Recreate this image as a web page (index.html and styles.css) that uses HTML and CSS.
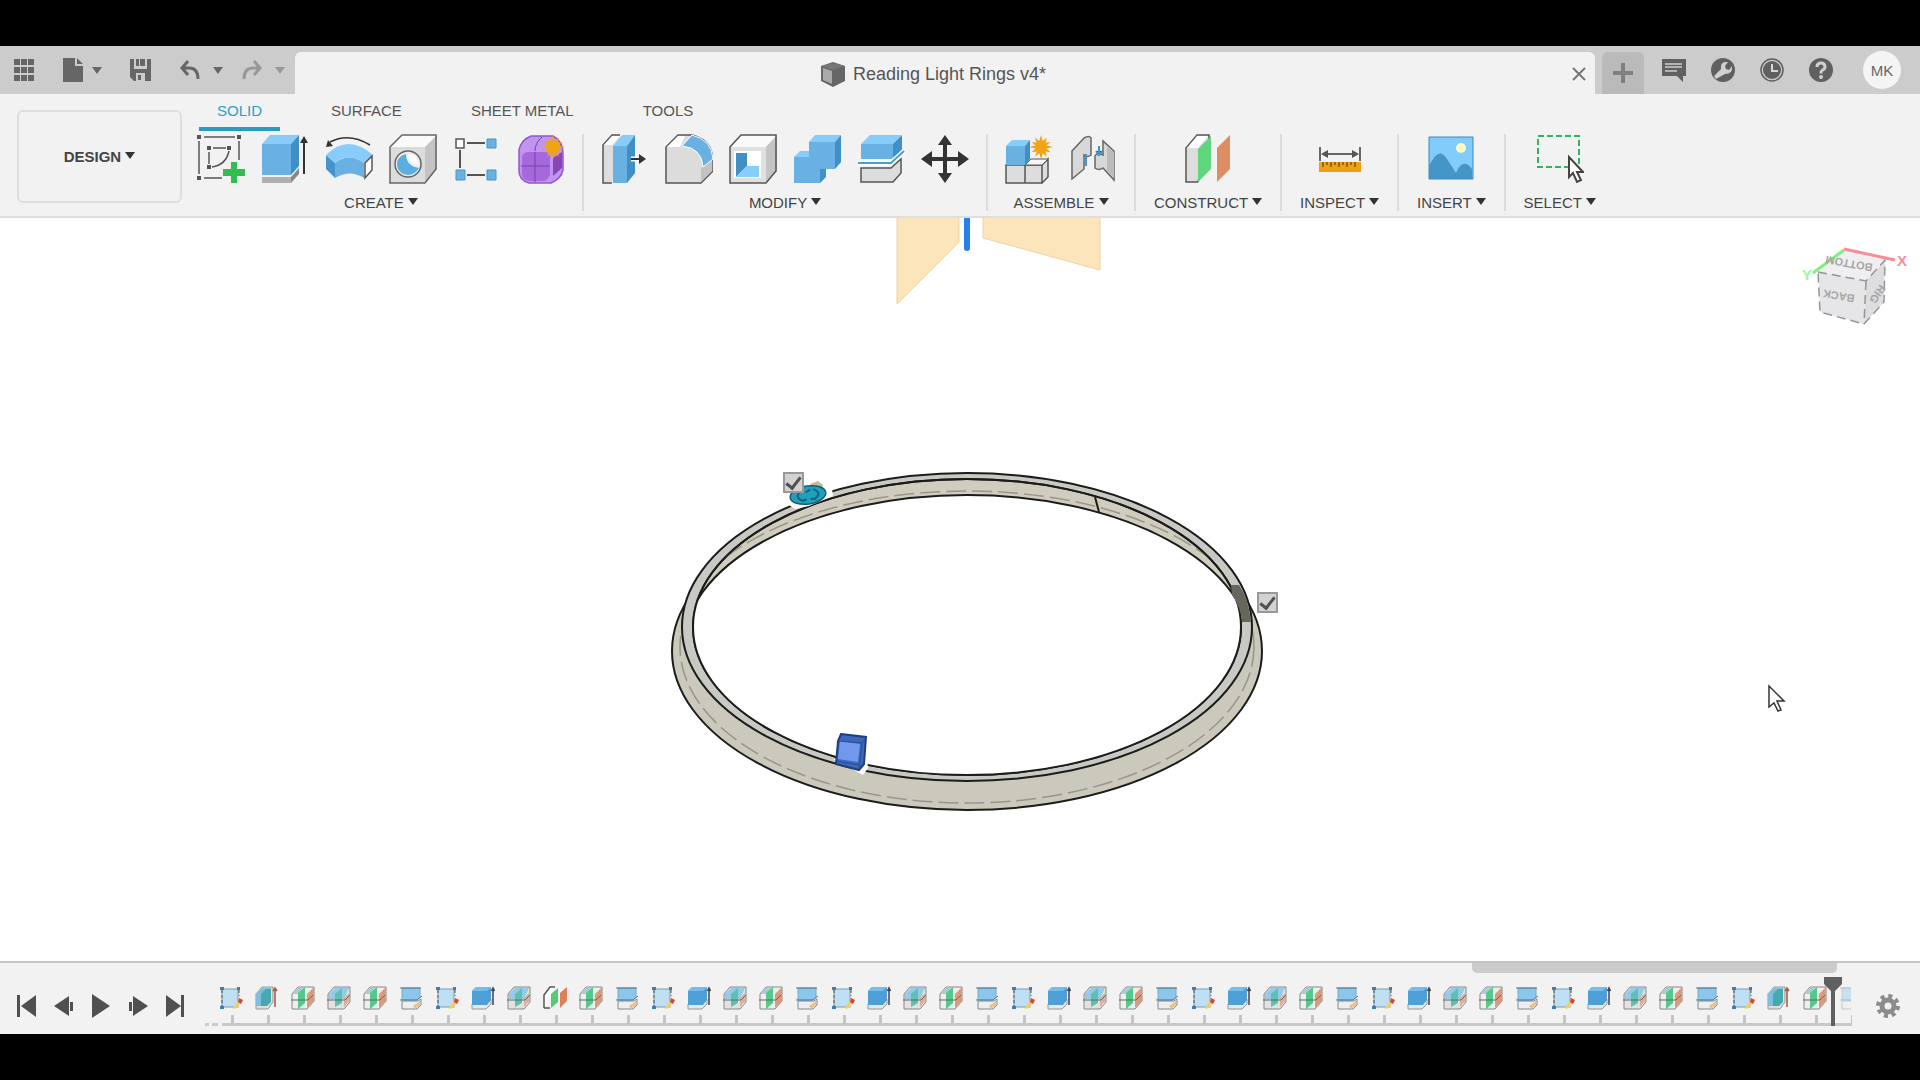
FILE: index.html
```html
<!DOCTYPE html>
<html lang="en">
<head>
    <meta charset="UTF-8">
    <meta name="viewport" content="width=device-width, initial-scale=1.0">
    <title>Reading Light Rings v4*</title>
    <link rel="stylesheet" href="styles.css">
</head>
<body>
    <!-- shared shapes -->
    <svg class="defs" aria-hidden="true">
        <symbol id="star" viewBox="0 0 24 24">
            <path fill="#f2a312" d="M12 0l1.800 6 4.200-3.500-1.500 5.300 5-.8-4 3.500L24 12l-6.500 1.500 4 3.800-5.200-.9L18 22l-4.200-3.800L12 24l-1.800-5.800L6 22l1.700-5.600-5.200.9 4-3.800L0 12l6.500-1.500-4-3.500 5 .8L6 2.500 10.200 6z"/>
        </symbol>
        <symbol id="f-sketch" viewBox="0 0 24 24">
            <rect x="3" y="3" width="16" height="18" fill="#bfe0f4" stroke="#7f99a8"/>
            <path fill="#3d7fae" d="M1 1h4v3H1zM18 1h3v3h-3zM1 20h4v3H1z"/>
            <path stroke="#555" stroke-dasharray="3 2" d="M3 4v16M20 4v6"/>
            <path fill="#f2cf63" d="M15 20l5-7 3 2-5 7-4 1z"/>
            <path fill="#d8413a" d="M20 12l4 2-2 4-3-2z"/>
        </symbol>
        <symbol id="f-extrude" viewBox="0 0 24 24">
            <path fill="#e6e6e6" stroke="#999" d="M1 18v5h14l5-5v-5z"/>
            <path fill="#4d9fd6" d="M1 5l4-4h15v13l-4 5H1z"/>
            <path fill="#74bdec" d="M1 5l4-4h15l-4 4z"/>
            <path stroke="#444" stroke-width="1.500" d="M22 4v15M20.500 5L22 2l1.500 3"/>
        </symbol>
        <symbol id="f-body" viewBox="0 0 24 24">
            <path fill="#ddd" stroke="#999" d="M1 8l6-7h11v15l-5 7H1z"/>
            <path fill="#7dbfe0" d="M1 8l6-6h9v5L12 20H1z"/>
            <path fill="#48a9ad" d="M6 8l5-5h5v13l-4 4H6z"/>
            <path stroke="#a8563e" stroke-width="1.500" d="M20 4v17M18 5l2-3 2 3"/>
        </symbol>
        <symbol id="f-plane" viewBox="0 0 24 24">
            <path fill="#eee" stroke="#888" d="M1 8l6-7h16v14l-7 8H1z"/>
            <path fill="#a9cddd" d="M7 2h6L7 8H2z"/>
            <path fill="#53c98a" d="M7 7l7-6v16l-7 6z"/>
            <path fill="#d99a7e" d="M16 8l7-7v14l-7 7z"/>
            <path stroke="#666" d="M0 14h17l5-5"/>
        </symbol>
        <symbol id="f-split" viewBox="0 0 24 24">
            <path fill="#e2e2e2" stroke="#888" d="M1 8l6-7h16v15l-6 7H1z"/>
            <path fill="#93cbe8" d="M2 8l6-6h14l-5 11H2z"/>
            <path fill="#5cc1ae" d="M8 8l7-6v15l-7 4z"/>
            <path fill="#dfae98" d="M17 12l5-5v8l-5 6z"/>
            <path stroke="#666" d="M0 14h18l5-5"/>
        </symbol>
        <symbol id="f-cut" viewBox="0 0 24 24">
            <path fill="#eee" stroke="#888" d="M3 15h16l3-2v6l-4 4H3z"/>
            <path fill="#8bc7ec" stroke="#7aa6c2" d="M3 2h18v9l-3 3H3z"/>
            <path stroke="#4c7896" d="M1 2h21M1 14h17l5-4"/>
            <path fill="#edc084" d="M14 20l7-5v4l-5 4z"/>
        </symbol>
        <symbol id="f-construct" viewBox="0 0 24 24">
            <path fill="#fff" stroke="#555" stroke-width="1.500" d="M1 22V9l6-8h5M1 22h6"/>
            <path fill="#52cc74" d="M8 8l7-6v14l-7 6z"/>
            <path fill="#dd8058" d="M17 7l7-6v14l-7 7z"/>
        </symbol>
    </svg>

    <header class="titlebar">
        <nav class="quick">
            <button aria-label="Data panel"><svg width="22" height="22"><path fill="#666" d="M1 0h6v6H1zM8 0h6v6H8zM15 0h6v6h-6zM1 8h6v6H1zM8 8h6v6H8zM15 8h6v6h-6zM1 16h6v6H1zM8 16h6v6H8zM15 16h6v6h-6z"/></svg></button>
            <button class="menu file" aria-label="File"><svg width="20" height="24"><path fill="#666" d="M0 0h12v8h8v16H0zM14 0l6 6h-6z"/></svg><span class="caret"></span></button>
            <button class="save" aria-label="Save"><svg width="22" height="24"><path fill="#666" fill-rule="evenodd" d="M0 1h21v22H4l-4-4zM4 1v10h13V1zM6 15v8h9v-8z"/><path fill="#666" d="M6 1h3v7H6zM10 1h5v7h-5zM8 17h3v5H8z"/></svg></button>
            <button class="menu" aria-label="Undo"><svg width="20" height="20" fill="none" stroke="#666" stroke-width="3"><path d="M8 1L2 8l6 7M2 8h7q9 0 9 11"/></svg><span class="caret wide"></span></button>
            <button class="menu faded" aria-label="Redo"><svg width="20" height="20" fill="none" stroke="#666" stroke-width="3"><path d="M12 1l6 7-6 7M18 8h-7q-9 0-9 11"/></svg><span class="caret wide"></span></button>
        </nav>
        <div class="document">
            <h1>
                <svg width="24" height="25"><path fill="#666" d="M0 4L12 0l12 4v15l-12 6L0 19z"/><path fill="#aaa" d="M2 6l9 3v13l-9-4z"/><path fill="#777" d="M1 4l11 4 11-4-11-3z"/></svg>
                Reading Light Rings v4*
            </h1>
            <button class="close" aria-label="Close"><svg width="14" height="14" stroke="#777" stroke-width="2"><path d="M1 1l12 12M13 1L1 13"/></svg></button>
        </div>
        <button class="new-tab" aria-label="New design"><svg width="20" height="20"><path fill="#808080" d="M8 0h4v8h8v4h-8v8H8v-8H0V8h8z"/></svg></button>
        <div class="account">
            <button aria-label="Comments"><svg width="24" height="24"><path fill="#606060" d="M0 1h24v17h-3v6l-6-6H0z"/><path stroke="#d0d0d0" stroke-width="1.500" d="M3 6h17M3 9h17M3 13h12"/></svg></button>
            <button aria-label="Extensions"><svg width="24" height="24"><circle cx="12" cy="12" r="12" fill="#606060"/><path fill="#d0d0d0" d="M5 21l-2-3 7-7q-1-6 4-7l3 0-3 4 1 3 3 1 3-4q1 8-7 8z"/></svg></button>
            <button aria-label="Job status"><svg width="24" height="24"><circle cx="12" cy="12" r="11" fill="none" stroke="#606060" stroke-width="1.500"/><circle cx="12" cy="12" r="9" fill="#606060"/><path fill="none" stroke="#d8d8d8" stroke-width="2" d="M12 6v7h6"/></svg></button>
            <button aria-label="Help"><svg width="24" height="24"><circle cx="12" cy="12" r="12" fill="#606060"/><path fill="none" stroke="#d0d0d0" stroke-width="3" d="M8 9q0-4 4-4t4 4q0 2-3 3.500-1 .5-1 3"/><circle cx="12" cy="19" r="2" fill="#d0d0d0"/></svg></button>
            <button class="avatar">MK</button>
        </div>
    </header>

    <section class="ribbon">
        <button class="workspace">DESIGN <span class="caret"></span></button>
        <div class="tools">
            <nav class="tabs">
                <a href="#solid" class="active">SOLID</a>
                <a href="#surface">SURFACE</a>
                <a href="#sheet-metal">SHEET METAL</a>
                <a href="#tools">TOOLS</a>
            </nav>
            <div class="groups">
                <div class="group first">
                    <div class="icons">
                        <button aria-label="Create sketch"><svg viewBox="0 0 48 50"><path fill="none" stroke="#555" stroke-width="1.500" d="M7 3h31M2 7v33M7 44h18M42 7v19M16 14h13M12 18v12M32 17q-3 14-17 16"/><path fill="#555" d="M0 1h4v4H0zM40 1h4v4h-4zM0 42h4v4H0zM10 12h4v4h-4zM30 12h4v4h-4zM10 31h4v4h-4z"/><path fill="#31bd51" d="M34 28h6v7h8v7h-8v7h-6v-7h-8v-7h8z"/></svg></button>
                        <button aria-label="Extrude"><svg viewBox="0 0 48 50"><path fill="#b0b0b0" d="M1 43h29v6H1z"/><path fill="#888" d="M30 43l8-9v6l-8 9z"/><path fill="#68b1e2" d="M1 10h29v31H1z"/><path fill="#87ccfb" d="M1 10l8-9h29l-8 9z"/><path fill="#3f90c7" d="M30 10l8-9v31l-8 9z"/><path stroke="#333" stroke-width="2" d="M43 40V6"/><path fill="#333" d="M43 2l4 7h-8z"/></svg></button>
                        <button aria-label="Revolve"><svg viewBox="0 0 48 50"><path fill="#4595cb" d="M1 21l9 8v15l-9-9z"/><path fill="#68b1e2" d="M10 29q14-11 29 0v15q-14-9-29 0z"/><path fill="#87ccfb" d="M1 21q22-22 47 0l-9 8q-15-11-29 0z"/><path fill="#fff" stroke="#555" stroke-width="1.500" d="M40 29l7-7v14l-7 8z"/><path fill="none" stroke="#333" stroke-width="1.500" d="M45 11Q24-2 5 8"/><path fill="#333" d="M1 13l2-7 5 6z"/></svg></button>
                        <button aria-label="Hole"><svg viewBox="0 0 48 50"><path fill="#dcdcdc" d="M1 13h35v36H1z"/><path fill="#fafafa" d="M1 13L13 1h35L36 13z"/><path fill="#c4c4c4" d="M36 13L48 1v34L36 49z"/><path fill="none" stroke="#666" stroke-width="1.500" d="M1 13L13 1h34v34L36 49H1z"/><circle cx="19" cy="30" r="13" fill="#eee" stroke="#666" stroke-width="1.500"/><path fill="#5aaee0" d="M17 20q0 12 13 14-4 7-11 7-11-1-11-12 1-7 9-9z"/><path fill="#fff" d="M19 20q9 0 11 11-10 0-11-11z"/></svg></button>
                        <button aria-label="Pattern"><svg viewBox="0 0 48 50"><path stroke="#555" stroke-width="2" d="M14 9h18M7 16v18M14 41h18"/><path fill="#fff" stroke="#555" stroke-width="1.500" d="M3 5h8v9H3z"/><path fill="#68b1e2" stroke="#4d94c2" d="M34 5h9v9h-9zM3 36h9v10H3zM34 36h9v10h-9z"/></svg></button>
                        <button aria-label="Create form"><svg viewBox="0 0 48 50"><path fill="#bf95f0" stroke="#9257cc" stroke-width="1.500" d="M2 16Q4 6 14 2h22q10 5 10 18v16q-2 9-12 13H12Q2 46 2 37z"/><path fill="#a768dc" d="M5 22q2-4 6-4h18q4 1 4 5v18q-2 5-6 6H12q-6-1-7-6z"/><path fill="#8745b8" d="M36 24l9-6v16l-9 8z"/><path fill="none" stroke="#7b42aa" d="M4 32h29M18 18v30M18 17q0-8 7-14"/><use href="#star" x="24" y="1" width="24" height="24"/></svg></button>
                    </div>
                    <button class="label">CREATE <span class="caret"></span></button>
                </div>
                <div class="group">
                    <div class="icons">
                        <button aria-label="Press pull"><svg viewBox="0 0 48 50"><path fill="#ddd" stroke="#555" stroke-width="1.500" d="M11 49H2V11L11 1h8"/><path fill="#fff" d="M3 11l8-9h8l-8 9z"/><path fill="#68b1e2" d="M12 12h14v37H12z"/><path fill="#87ccfb" d="M12 12l9-11h13l-8 11z"/><path fill="#3f90c7" d="M26 12l8-11v38l-8 10z"/><path stroke="#fff" stroke-width="5" d="M30 25h9"/><path stroke="#333" stroke-width="2" d="M30 25h10"/><path fill="#333" d="M38 20l7 5-7 5z"/></svg></button>
                        <button aria-label="Fillet"><svg viewBox="0 0 48 50"><path fill="#dcdcdc" stroke="#555" stroke-width="1.500" d="M1 49V13L13 1h14q20 5 21 25v11L36 49z"/><path fill="#fff" d="M2 13L13 2h7l-5 11z"/><path fill="#c2c2c2" d="M36 34l11-9v12L36 48z"/><path fill="#68b1e2" stroke="#fff" d="M17 12L27 1q20 5 21 24l-10 8Q37 14 17 12z"/></svg></button>
                        <button aria-label="Shell"><svg viewBox="0 0 48 50"><path fill="#e0e0e0" d="M1 13h36v36H1z"/><path fill="#fafafa" d="M1 13L12 1h36L37 13z"/><path fill="#c4c4c4" d="M37 13L48 1v36L37 49z"/><path fill="none" stroke="#555" stroke-width="1.500" d="M1 13L12 1h35v36L37 49H1z"/><path fill="#fff" d="M5 17h27v27H5z"/><path fill="#3f90c7" d="M7 19h11v13L7 43z"/><path fill="#87ccfb" d="M18 32h12v11H7z"/></svg></button>
                        <button aria-label="Combine"><svg viewBox="0 0 48 50"><path fill="#68b1e2" d="M1 23h15V8h26v27H27v14H1z"/><path fill="#87ccfb" d="M1 23l6-6h9v6zM16 8l6-7h26l-6 7z"/><path fill="#3f90c7" d="M42 8l6-7v27l-6 7zM27 35h6v8l-6 6z"/></svg></button>
                        <button aria-label="Split body"><svg viewBox="0 0 48 50"><path fill="#ddd" stroke="#555" stroke-width="1.500" d="M4 34h30l10-9v14l-8 9H4z"/><path fill="#68b1e2" d="M4 10h32v15H4z"/><path fill="#87ccfb" d="M4 10l9-9h32l-9 9z"/><path fill="#3f90c7" d="M36 10l9-9v15l-9 9z"/><path fill="none" stroke="#fff" stroke-width="5" d="M1 29h33l13-12"/><path fill="none" stroke="#4b9ed4" stroke-width="2" d="M1 29h33l13-12"/></svg></button>
                        <button aria-label="Move"><svg viewBox="0 0 48 50"><path fill="#333" d="M24 1l7 10h-5v12h11v-6l11 8-11 8v-6H26v12h5l-7 10-7-10h5V27H11v6L0 25l11-8v6h11V11h-5z"/></svg></button>
                    </div>
                    <button class="label">MODIFY <span class="caret"></span></button>
                </div>
                <div class="group">
                    <div class="icons">
                        <button aria-label="New component"><svg viewBox="0 0 48 50"><path fill="#ddd" stroke="#555" stroke-width="1.500" d="M1 31h36v18H1zM20 31v18M37 31l6-6v18l-6 6"/><path fill="#f6f6f6" stroke="#555" d="M20 31l6-6h17l-6 6z"/><path fill="#68b1e2" d="M1 12h19v19H1z"/><path fill="#87ccfb" d="M1 12l6-6h18l-5 6z"/><path fill="#3f90c7" d="M20 12l5-6v19l-5 6z"/><use href="#star" x="24" y="1" width="24" height="24"/></svg></button>
                        <button aria-label="Joint"><svg viewBox="0 0 48 50"><path fill="#d8d8d8" stroke="#666" stroke-width="1.500" d="M3 17L15 4q5-3 7 0v17q-4 3-7 0v14L3 45zM45 17L34 7v14q-6-3-8 1v12q4 3 8 0l11 12z"/><path fill="#bbb" d="M38 13l7 5v26l-7-7z"/><path stroke="#4094c8" stroke-width="2" d="M17 20v12M30 12v9M27 17l3 4 3-4"/></svg></button>
                    </div>
                    <button class="label">ASSEMBLE <span class="caret"></span></button>
                </div>
                <div class="group wide">
                    <div class="icons">
                        <button aria-label="Offset plane"><svg viewBox="0 0 48 50"><path fill="#ddd" stroke="#555" stroke-width="1.500" d="M14 48H2V14L13 1h12v5L14 48"/><path fill="#fff" d="M3 14L13 2h11L14 14z"/><path fill="#5fd67c" d="M14 15L27 2v33L14 48z"/><path fill="#df8d62" d="M33 14L46 1v34L33 48z"/></svg></button>
                    </div>
                    <button class="label">CONSTRUCT <span class="caret"></span></button>
                </div>
                <div class="group wide">
                    <div class="icons">
                        <button aria-label="Measure"><svg viewBox="0 0 48 50"><path stroke="#666" stroke-width="2" d="M4 13v14M44 13v14M8 20h32"/><path fill="#555" d="M5 20l7-4v8zM43 20l-7-4v8z"/><path fill="#f0a010" d="M3 28h42v10H3z"/><path stroke="#795516" stroke-width="1.500" d="M7 28v5M11 28v3M15 28v5M19 28v3M23 28v5M27 28v3M31 28v5M35 28v3M39 28v5"/></svg></button>
                    </div>
                    <button class="label">INSPECT <span class="caret"></span></button>
                </div>
                <div class="group wide">
                    <div class="icons">
                        <button aria-label="Insert image"><svg viewBox="0 0 48 50"><path fill="#82ccfb" stroke="#3f86b5" d="M2 3h44v42H2z"/><path fill="#4595c8" d="M2 32q10-21 18-7l9 14q7-16 16-4v10H2z"/><circle cx="34" cy="14" r="5" fill="#fff9c8"/></svg></button>
                    </div>
                    <button class="label">INSERT <span class="caret"></span></button>
                </div>
                <div class="group wide last">
                    <div class="icons">
                        <button aria-label="Select"><svg viewBox="0 0 48 50"><path fill="none" stroke="#35b35b" stroke-width="2" stroke-dasharray="6 3" d="M2 2h41v31H2z"/><path fill="#fff" stroke="#444" stroke-width="2" d="M33 23v20l4-4 4 9 4-2-4-8h6z"/></svg></button>
                    </div>
                    <button class="label">SELECT <span class="caret"></span></button>
                </div>
            </div>
        </div>
    </section>

    <main class="viewport">
        <svg class="scene" viewBox="0 218 1920 743" preserveAspectRatio="xMidYMin slice">
            <!-- origin planes and axis -->
            <path fill="#fde5bb" stroke="#ecd3a3" d="M897 216v88l62-62v-26zM983 216v22l117 32v-54z"/>
            <path stroke="#2781ea" stroke-width="6" stroke-linecap="round" d="M967 214v34"/>

            <!-- ring body -->
            <clipPath id="rim"><ellipse cx="967" cy="627" rx="274" ry="148"/></clipPath>
            <g stroke="#1c1c1a" stroke-width="2">
                <ellipse cx="967" cy="651" rx="295" ry="159" fill="#cbc8bc"/>
                <ellipse cx="967" cy="647" rx="287" ry="156" fill="none" stroke="#98968c" stroke-width="1.500" stroke-dasharray="20 6"/>
                <ellipse cx="967" cy="627" rx="285" ry="154" fill="#c8c8c4"/>
                <ellipse cx="967" cy="627" rx="274" ry="148" fill="#d0cdbf"/>
                <g clip-path="url(#rim)">
                    <ellipse cx="967" cy="640" rx="290" ry="149" fill="none" stroke="#98968c" stroke-width="1.500" stroke-dasharray="20 6"/>
                    <ellipse cx="967" cy="648" rx="284" ry="153" fill="#fff"/>
                </g>
                <ellipse cx="967" cy="627" rx="274" ry="148" fill="none"/>
                <path d="M1095 497l4 15"/>
            </g>
            <path fill="#66665c" d="M1231 585h8q10 14 12 37h-9q-1-14-10-27z"/>

            <!-- selected parts -->
            <path fill="#fff" d="M786 503q0-12 19-17 20-6 27 3l1 7-24 10-14 3z"/>
            <path fill="#c6b99b" d="M810 484l8-3 5 4-2 8z"/>
            <g transform="rotate(-9 808 495)">
                <ellipse cx="808" cy="495" rx="18" ry="9" fill="#20a0bd" stroke="#175d70" stroke-width="1.500"/>
                <path fill="none" stroke="#146379" stroke-width="2" d="M802 490q-9 5 0 10l4-1M814 490q9 5 0 10l-4-1M806 492l5-2"/>
            </g>
            <path fill="#fff" d="M833 759l30 16 5-7-1-8z"/>
            <path fill="#3b68bc" stroke="#203e7c" stroke-width="2" d="M841 734l25 3-2 27-5 6-23-6 2-23z"/>
            <path fill="#7397ed" d="M840 741l20 3-2 18-20-3z"/>
            <path fill="none" stroke="#284b93" d="M838 741l24 2-3 26M837 761l22 4M862 743l4-5"/>

            <!-- view cube -->
            <g>
                <path fill="#efeff1" d="M1818 272l26-22 40 10-18 21z"/>
                <path fill="#e6e6e9" d="M1818 272l48 9-2 43-44-12z"/>
                <path fill="#dedee1" d="M1866 281l19-21-1 42-20 22z"/>
                <path fill="none" stroke="#969696" stroke-width="1.500" stroke-dasharray="9 5" d="M1818 272l48 9 19-21-1 42-20 22-44-12-2-40M1866 281l-2 43"/>
                <path stroke="#7df07d" stroke-width="3" d="M1844 250l-31 23"/>
                <path stroke="#fb8b96" stroke-width="3" d="M1844 249l51 11"/>
                <text class="face" transform="translate(1855 295) rotate(190)">BACK</text>
                <text class="face" transform="translate(1873 264) rotate(190)">BOTTOM</text>
                <text class="face" transform="translate(1880 284) rotate(125)">RIG</text>
                <text class="axis x" x="1897" y="266">X</text>
                <text class="axis y" x="1802" y="280">Y</text>
            </g>

            <path fill="#fff" stroke="#333" stroke-width="1.500" d="M1769 686v21l5-4 4 8 3-1-4-9h7z"/>
        </svg>
        <input type="checkbox" class="pick one" aria-label="First body" checked>
        <input type="checkbox" class="pick two" aria-label="Second body" checked>
    </main>

    <footer class="timeline">
        <div class="playback">
            <button aria-label="Go to start"><svg width="20" height="24" fill="#505050"><path d="M0 1h3v22H0zM19 1v22L4 12z"/></svg></button>
            <button aria-label="Step back"><svg width="20" height="24" fill="#505050"><path d="M15 2v20L0 12zM16 8h3v9h-3z"/></svg></button>
            <button aria-label="Play"><svg width="20" height="24" fill="#505050"><path d="M1 0v24l18-12z"/></svg></button>
            <button aria-label="Step forward"><svg width="20" height="24" fill="#505050"><path d="M5 2v20l15-10zM1 8h3v9H1z"/></svg></button>
            <button aria-label="Go to end"><svg width="20" height="24" fill="#505050"><path d="M16 1h3v22h-3zM1 1v22l15-11z"/></svg></button>
        </div>
        <div class="track">
            <div class="scroll"></div>
            <ol id="features"></ol>
        </div>
        <button class="settings" aria-label="Timeline settings"><svg width="24" height="24"><circle cx="12" cy="12" r="6" fill="none" stroke="#8c8c8c" stroke-width="5"/><circle cx="12" cy="12" r="10" fill="none" stroke="#8c8c8c" stroke-width="4" stroke-dasharray="4 3.850"/></svg></button>
    </footer>

    <script>
        const cycle = ['sketch', 'extrude', 'split', 'plane', 'cut'];
        let features = ['sketch', 'body', 'plane', 'split', 'plane', 'cut', 'sketch', 'extrude', 'split', 'construct', 'plane', 'cut'];

        for (let i = 0; i < 30; i++) {
            features.push(cycle[i % cycle.length]);
        }
        features.push('sketch', 'body', 'plane', 'cut');

        document.getElementById('features').innerHTML = features.map(type =>
            `<li><button aria-label="${type}"><svg width="24" height="24" fill="none"><use href="#f-${type}"/></svg></button></li>`
        ).join('');
    </script>
</body>
</html>
```
FILE: styles.css
```css
* {
    box-sizing: border-box;
}
body {
    font-family: "Liberation Sans", Arial, sans-serif;
    font-size: 15px;
    margin: 0;
    padding: 46px 0;
    height: 100vh;
    display: flex;
    flex-direction: column;
    background: #000;
    color: #444;
    overflow: hidden;
}
button {
    font: inherit;
    color: inherit;
    background: none;
    border: none;
    padding: 0;
    cursor: pointer;
    white-space: nowrap;
}
svg {
    display: block;
}
.defs {
    position: absolute;
    width: 0;
    height: 0;
}
.caret {
    display: inline-block;
    border: 5px solid transparent;
    border-top: 7px solid #333;
    border-bottom: 0;
    vertical-align: 3px;
}

/* title bar */
.titlebar {
    display: flex;
    height: 48px;
    flex-shrink: 0;
    padding-top: 6px;
    background: #cccccc;
}
.quick {
    width: 295px;
    display: flex;
    align-items: center;
    padding: 0 10px 6px 13px;
}
.quick button {
    display: flex;
    align-items: center;
    margin-right: 28px;
}
.quick .caret {
    border-top-color: #666;
    margin-left: 9px;
}
.quick .caret.wide {
    margin-left: 13px;
}
.quick .menu:nth-child(4) {
    margin-right: 19px;
}
.quick .faded {
    opacity: 0.5;
    margin-right: 0;
}
.document {
    flex: 1;
    display: flex;
    align-items: center;
    background: #f2f2f2;
    border-radius: 6px 6px 0 0;
    padding: 2px 9px 0 0;
}
.document h1 {
    flex: 1;
    display: flex;
    justify-content: center;
    align-items: center;
    gap: 8px;
    margin: 0;
    font-size: 18px;
    font-weight: normal;
    color: #555;
}
.new-tab {
    width: 42px;
    margin: 0 18px 0 7px;
    display: flex;
    align-items: center;
    justify-content: center;
    background: #bababa;
    border-radius: 6px 6px 0 0;
}
.account {
    display: flex;
    align-items: center;
    gap: 25px;
    padding: 0 19px 6px 0;
}
.avatar {
    width: 38px;
    height: 38px;
    margin-left: 5px;
    border-radius: 50%;
    background: #f4f4f4;
    color: #666;
}

/* ribbon */
.ribbon {
    display: flex;
    flex-shrink: 0;
    height: 124px;
    background: #f2f2f2;
    border-bottom: 2px solid #dedede;
}
.workspace {
    width: 165px;
    height: 93px;
    margin: 16px 15px 0 17px;
    border: 2px solid #dedede;
    border-radius: 6px;
    font-weight: bold;
}
.tabs {
    display: flex;
    gap: 33px;
    padding-left: 2px;
}
.tabs a {
    height: 37px;
    padding: 8px 18px 0;
    line-height: 18px;
    color: #555;
    text-decoration: none;
}
.tabs .active {
    color: #2a9fca;
    border-bottom: 4px solid #2a9abf;
}
.groups {
    display: flex;
    padding-top: 3px;
}
.group {
    height: 77px;
    padding: 0 17px;
    border-right: 2px solid #dcdcdc;
    display: flex;
    flex-direction: column;
    align-items: center;
}
.group.first {
    padding-left: 0;
}
.group.wide {
    padding: 0 18px;
}
.group.last {
    border: none;
}
.icons {
    display: flex;
    gap: 16px;
}
.icons svg {
    width: 48px;
    height: 50px;
}
.label {
    height: 18px;
    line-height: 18px;
    margin-top: 10px;
}

/* modelling area */
.viewport {
    flex: 1;
    min-height: 0;
    position: relative;
    background: #fff;
}
.scene {
    width: 100%;
    height: 100%;
}
.face {
    font-size: 11px;
    font-weight: bold;
    fill: #a5a5a5;
}
.axis {
    font-size: 15px;
    font-weight: bold;
    fill: #fb8b96;
}
.axis.y {
    fill: #9df59d;
}
.pick {
    position: absolute;
    appearance: none;
    width: 21px;
    height: 21px;
    margin: 0;
    border: 2px solid #999;
    background: #d2d2d2;
}
.pick:checked::before {
    content: "";
    display: block;
    width: 6px;
    height: 12px;
    margin: 0 auto;
    border: solid #505050;
    border-width: 0 3px 3px 0;
    transform: rotate(38deg);
}
.pick.one {
    left: calc(50% - 177px);
    top: 254px;
}
.pick.two {
    left: calc(50% + 297px);
    top: 374px;
}

/* timeline */
.timeline {
    display: flex;
    flex-shrink: 0;
    height: 73px;
    border-top: 2px solid #c4c4c4;
    background: #f2f2f2;
}
.playback {
    width: 205px;
    flex-shrink: 0;
    display: flex;
    align-items: center;
    gap: 17px;
    padding: 14px 0 0 17px;
}
.track {
    flex: 1;
    min-width: 0;
    overflow: hidden;
}
.scroll {
    width: 365px;
    height: 10px;
    margin: 0 15px 0 auto;
    background: #cbcbcb;
    border-radius: 0 0 5px 5px;
}
#features {
    display: flex;
    list-style: none;
    margin: 13px 0 0;
    padding: 0 0 2px 9px;
    background: linear-gradient(90deg, #ccc 4px, transparent 4px 7px, #ccc 7px 13px, transparent 13px 17px, #c8c8c8 17px) bottom / 100% 3px no-repeat;
}
#features li {
    width: 36px;
    height: 38px;
    flex-shrink: 0;
    position: relative;
}
#features button {
    display: block;
    margin-left: 5px;
}
#features li::after {
    content: "";
    display: block;
    width: 3px;
    height: 9px;
    margin: 5px 0 0 17px;
    background: #c4c4c4;
}
#features li:last-child {
    width: 18px;
}
#features li:last-child button {
    width: 12px;
    overflow: hidden;
    opacity: 0.4;
}
/* history marker sits in front of the rolled back feature */
#features li:last-child::before {
    content: "";
    position: absolute;
    left: -10px;
    top: -9px;
    width: 18px;
    height: 49px;
    background: #606060;
    clip-path: polygon(0 0, 100% 0, 100% 7px, 11px 14px, 11px 100%, 7px 100%, 7px 14px, 0 7px);
}
.settings {
    width: 68px;
    display: flex;
    justify-content: center;
    padding-top: 31px;
    padding-left: 4px;
}
```
